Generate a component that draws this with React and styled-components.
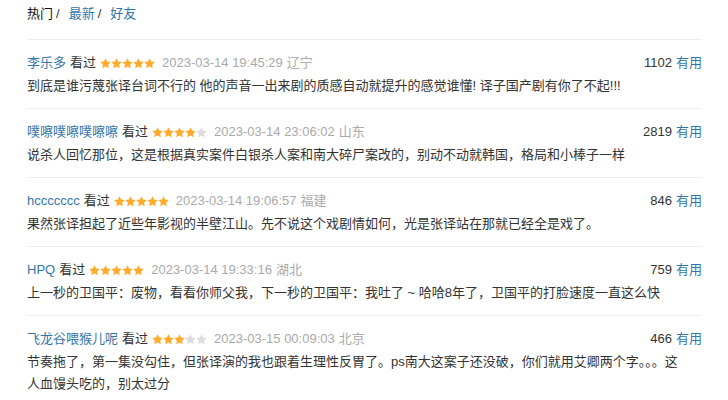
import React from "react";
import styled, { createGlobalStyle } from "styled-components";

const Global = createGlobalStyle`
  html, body { margin: 0; padding: 0; background: #fff; }
  body { font-family: "Liberation Sans", Arial, "Noto Sans CJK SC", sans-serif; font-size: 13px; color: #333; }
`;

const Wrap = styled.div`
  width: 675px;
  padding: 4px 0 0 27px;
`;

const Tabs = styled.div`
  display: flex;
  align-items: center;
  height: 20px;
  line-height: 20px;
  margin-bottom: 15px;
`;

const Tab = styled.span`
  color: ${(p) => (p.$active ? "#111" : "#37a")};
`;

const Sep = styled.span`
  color: #333;
  margin: 0 9px 0 3px;
`;

const Item = styled.div`
  border-top: 1px solid #eee;
  padding: 12px 0 11px;
`;

const Head = styled.div`
  display: flex;
  align-items: center;
  height: 22px;
  line-height: 22px;
  margin-bottom: 1px;
`;

const Name = styled.span`
  color: #37a;
`;

const Plain = styled.span`
  color: #333;
  margin-left: 4px;
`;

const Stars = styled.span`
  display: inline-flex;
  margin-left: 4px;
`;

const Time = styled.span`
  color: #aaa;
  margin-left: 7px;
`;

const Loc = styled.span`
  color: #aaa;
  margin-left: 4px;
`;

const Votes = styled.span`
  margin-left: auto;
  color: #333;
`;

const Useful = styled.span`
  color: #37a;
  margin-left: 4px;
`;

const Body = styled.div`
  width: 662px;
  line-height: 22px;
  color: #333;
  word-break: break-all;
`;

const Star = ({ on }) => (
  <svg width="11" height="11" viewBox="0 0 24 24">
    <path
      d="M12 0.5l3.5 7.3 8 1.1-5.8 5.6 1.4 8L12 18.7l-7.1 3.8 1.4-8L0.5 8.9l8-1.1z"
      fill={on ? "#ffac2d" : "#ddd"}
    />
  </svg>
);

const data = [
  {
    name: "李乐多",
    stars: 5,
    time: "2023-03-14 19:45:29",
    loc: "辽宁",
    votes: 1102,
    text: "到底是谁污蔑张译台词不行的 他的声音一出来剧的质感自动就提升的感觉谁懂! 译子国产剧有你了不起!!!",
  },
  {
    name: "噗嚓噗嚓噗嚓嚓",
    stars: 4,
    time: "2023-03-14 23:06:02",
    loc: "山东",
    votes: 2819,
    text: "说杀人回忆那位，这是根据真实案件白银杀人案和南大碎尸案改的，别动不动就韩国，格局和小棒子一样",
  },
  {
    name: "hccccccc",
    stars: 5,
    time: "2023-03-14 19:06:57",
    loc: "福建",
    votes: 846,
    text: "果然张译担起了近些年影视的半壁江山。先不说这个戏剧情如何，光是张译站在那就已经全是戏了。",
  },
  {
    name: "HPQ",
    stars: 5,
    time: "2023-03-14 19:33:16",
    loc: "湖北",
    votes: 759,
    text: "上一秒的卫国平：废物，看看你师父我，下一秒的卫国平：我吐了 ~ 哈哈8年了，卫国平的打脸速度一直这么快",
  },
  {
    name: "飞龙谷喂猴儿呢",
    stars: 3,
    time: "2023-03-15 00:09:03",
    loc: "北京",
    votes: 466,
    text: "节奏拖了，第一集没勾住，但张译演的我也跟着生理性反胃了。ps南大这案子还没破，你们就用艾卿两个字。。。这人血馒头吃的，别太过分",
  },
];

export default function App() {
  return (
    <>
      <Global />
      <Wrap>
        <Tabs>
          <Tab $active>热门</Tab>
          <Sep>/</Sep>
          <Tab>最新</Tab>
          <Sep>/</Sep>
          <Tab>好友</Tab>
        </Tabs>
        {data.map((d) => (
          <Item key={d.name}>
            <Head>
              <Name>{d.name}</Name>
              <Plain>看过</Plain>
              <Stars>
                {[0, 1, 2, 3, 4].map((i) => (
                  <Star key={i} on={i < d.stars} />
                ))}
              </Stars>
              <Time>{d.time}</Time>
              <Loc>{d.loc}</Loc>
              <Votes>{d.votes}</Votes>
              <Useful>有用</Useful>
            </Head>
            <Body>{d.text}</Body>
          </Item>
        ))}
      </Wrap>
    </>
  );
}
